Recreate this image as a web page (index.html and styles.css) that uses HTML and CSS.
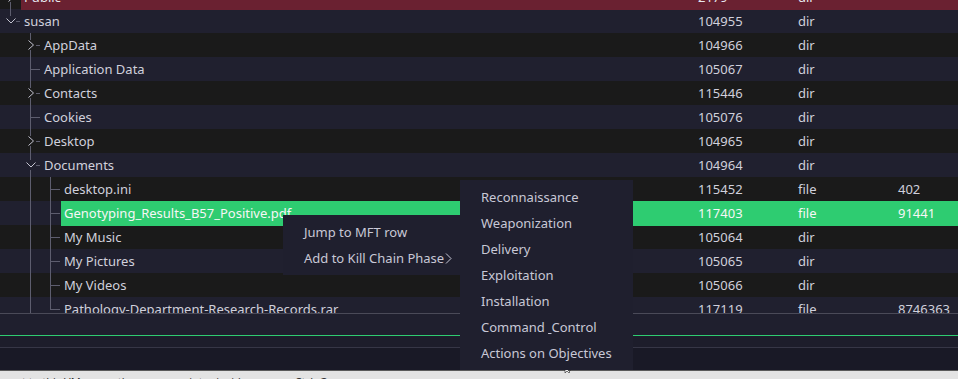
FILE: index.html
```html
<!DOCTYPE html>
<html lang="en">
<head>
  <meta charset="UTF-8" />
  <meta name="viewport" content="width=device-width, initial-scale=1.0" />
  <title>MFT Browser</title>
  <link rel="stylesheet" href="styles.css">
</head>
<body>

  <div class="vm">
    <div class="tree">
      <div class="rows">

        <div class="row flag">
          <div class="name">
            <span class="g tee"><svg class="chev" viewBox="0 0 10 10"><polyline points="2.5,0.5 7.5,5 2.5,9.5" /></svg></span>
            <span class="label">Public</span>
          </div>
          <span class="cell">2179</span><span class="cell">dir</span><span class="cell"></span>
        </div>

        <div class="row">
          <div class="name">
            <span class="g end"><svg class="chev" viewBox="0 0 10 10"><polyline points="0.5,2.5 5,7 9.5,2.5" /></svg></span>
            <span class="label">susan</span>
          </div>
          <span class="cell">104955</span><span class="cell">dir</span><span class="cell"></span>
        </div>

        <div class="row">
          <div class="name">
            <span class="g"></span>
            <span class="g tee"><svg class="chev" viewBox="0 0 10 10"><polyline points="2.5,0.5 7.5,5 2.5,9.5" /></svg></span>
            <span class="label">AppData</span>
          </div>
          <span class="cell">104966</span><span class="cell">dir</span><span class="cell"></span>
        </div>

        <div class="row">
          <div class="name">
            <span class="g"></span>
            <span class="g tee"></span>
            <span class="label">Application Data</span>
          </div>
          <span class="cell">105067</span><span class="cell">dir</span><span class="cell"></span>
        </div>

        <div class="row">
          <div class="name">
            <span class="g"></span>
            <span class="g tee"><svg class="chev" viewBox="0 0 10 10"><polyline points="2.5,0.5 7.5,5 2.5,9.5" /></svg></span>
            <span class="label">Contacts</span>
          </div>
          <span class="cell">115446</span><span class="cell">dir</span><span class="cell"></span>
        </div>

        <div class="row">
          <div class="name">
            <span class="g"></span>
            <span class="g tee"></span>
            <span class="label">Cookies</span>
          </div>
          <span class="cell">105076</span><span class="cell">dir</span><span class="cell"></span>
        </div>

        <div class="row">
          <div class="name">
            <span class="g"></span>
            <span class="g tee"><svg class="chev" viewBox="0 0 10 10"><polyline points="2.5,0.5 7.5,5 2.5,9.5" /></svg></span>
            <span class="label">Desktop</span>
          </div>
          <span class="cell">104965</span><span class="cell">dir</span><span class="cell"></span>
        </div>

        <div class="row">
          <div class="name">
            <span class="g"></span>
            <span class="g tee"><svg class="chev" viewBox="0 0 10 10"><polyline points="0.5,2.5 5,7 9.5,2.5" /></svg></span>
            <span class="label">Documents</span>
          </div>
          <span class="cell">104964</span><span class="cell">dir</span><span class="cell"></span>
        </div>

        <div class="row">
          <div class="name">
            <span class="g"></span>
            <span class="g pipe"></span>
            <span class="g tee"></span>
            <span class="label">desktop.ini</span>
          </div>
          <span class="cell">115452</span><span class="cell">file</span><span class="cell">402</span>
        </div>

        <div class="row sel">
          <div class="name">
            <span class="g"></span>
            <span class="g pipe"></span>
            <span class="g tee"></span>
            <span class="label">Genotyping_Results_B57_Positive.pdf</span>
          </div>
          <span class="cell">117403</span><span class="cell">file</span><span class="cell">91441</span>
        </div>

        <div class="row">
          <div class="name">
            <span class="g"></span>
            <span class="g pipe"></span>
            <span class="g tee"></span>
            <span class="label">My Music</span>
          </div>
          <span class="cell">105064</span><span class="cell">dir</span><span class="cell"></span>
        </div>

        <div class="row">
          <div class="name">
            <span class="g"></span>
            <span class="g pipe"></span>
            <span class="g tee"></span>
            <span class="label">My Pictures</span>
          </div>
          <span class="cell">105065</span><span class="cell">dir</span><span class="cell"></span>
        </div>

        <div class="row">
          <div class="name">
            <span class="g"></span>
            <span class="g pipe"></span>
            <span class="g tee"></span>
            <span class="label">My Videos</span>
          </div>
          <span class="cell">105066</span><span class="cell">dir</span><span class="cell"></span>
        </div>

        <div class="row">
          <div class="name">
            <span class="g"></span>
            <span class="g pipe"></span>
            <span class="g end"></span>
            <span class="label">Pathology-Department-Research-Records.rar</span>
          </div>
          <span class="cell">117119</span><span class="cell">file</span><span class="cell">8746363</span>
        </div>

      </div>
    </div>

    <div class="pane pane-a"></div>
    <div class="pane pane-b"></div>
    <div class="pane pane-c"></div>

    <div class="status">
      <span class="status-text">t to this VM, move the mouse pointer inside or press Ctrl+G.</span>
    </div>

    <!-- context menu + kill chain submenu -->
    <div class="menu menu-main">
      <div class="item">Jump to MFT row</div>
      <div class="item has-sub">Add to Kill Chain Phase
        <svg class="sub-arrow" viewBox="0 0 7 11"><polyline points="1,0.5 6,5.5 1,10.5" /></svg>
      </div>
    </div>

    <div class="menu menu-sub">
      <div class="item">Reconnaissance</div>
      <div class="item">Weaponization</div>
      <div class="item">Delivery</div>
      <div class="item">Exploitation</div>
      <div class="item">Installation</div>
      <div class="item">Command <u>&nbsp;</u>Control</div>
      <div class="item">Actions on Objectives</div>
    </div>

    <svg class="cursor" viewBox="0 0 8 8"><polygon points="1,1 1,8 3,6 5,8 6,7 4,5 7,5" /></svg>
  </div>

</body>
</html>
```

FILE: styles.css
```css
body {
  margin: 0;
  background-color: #1a1a1a;
  font-family: "Noto Sans", sans-serif;
  font-size: 13px;
  color: #d0d0dc;
  overflow: hidden;
}
.vm {
  position: relative;
  width: 958px;
  height: 379px;
  display: flex;
  flex-direction: column;
  overflow: hidden;
}

/* tree table */
.tree {
  height: 313px;
  overflow: hidden;
  flex: none;
}
.rows {
  margin-top: -15px;
}
.row {
  --bg: #1a1a1a;
  display: grid;
  grid-template-columns: 698px 100px 100px 60px;
  height: 24px;
  line-height: 25px;
  background-color: var(--bg);
  white-space: nowrap;
}
.row:nth-child(even) {
  --bg: #20202f;
}
.name {
  display: flex;
}
.label {
  flex: 1;
  margin-left: 1px;
  padding-left: 3px;
}
.row.flag .label,
.row.flag .cell {
  background-color: #6a2131;
  color: #e6e6ee;
}
.row.sel .label,
.row.sel .cell {
  background-color: #2ecc71;
  color: #f6f6f6;
}

/* branch guides */
.g {
  --line: #5d5d6e;
  flex: none;
  width: 20px;
  height: 24px;
  background-repeat: no-repeat;
}
.g.pipe {
  background-image: linear-gradient(var(--line), var(--line));
  background-position: 10px 0;
  background-size: 1px 100%;
}
.g.tee {
  background-image: linear-gradient(var(--line), var(--line)), linear-gradient(var(--line), var(--line));
  background-position: 10px 0, 10px 12px;
  background-size: 1px 100%, 11px 1px;
}
.g.end {
  background-image: linear-gradient(var(--line), var(--line)), linear-gradient(var(--line), var(--line));
  background-position: 10px 0, 10px 12px;
  background-size: 1px 12px, 11px 1px;
}
.chev {
  display: block;
  width: 10px;
  height: 10px;
  margin: 7px 0 0 6px;
  background-color: var(--bg);
  fill: none;
  stroke: #c4c4d0;
  stroke-width: 1;
}

/* lower panes */
.pane {
  flex: none;
}
.pane-a {
  height: 21px;
  border-top: 1px solid #4a4a58;
  background-color: #1f1f2e;
}
.pane-b {
  height: 11px;
  border-top: 1px solid #2ecc71;
  background-color: #1d1d2b;
}
.pane-c {
  height: 22px;
  border-top: 1px solid #363646;
  background-color: #191926;
}
.status {
  flex: none;
  height: 8px;
  border-top: 1px solid #5a5a5a;
  background-color: #e3e3e3;
  overflow: hidden;
  font-size: 11px;
  line-height: 12px;
  color: #333;
  padding-left: 22px;
}
.status-text {
  display: block;
  padding-top: 5px;
  white-space: nowrap;
}

/* menus */
.menu {
  position: absolute;
  background-color: #1f1f2e;
  padding: 4px 0;
  color: #c8c8d6;
  z-index: 2;
}
.menu-main {
  left: 283px;
  top: 215px;
  width: 177px;
  height: 52px;
}
.menu-sub {
  left: 460px;
  top: 180px;
  width: 173px;
  height: 182px;
}
.item {
  height: 26px;
  line-height: 26px;
  padding-left: 21px;
  white-space: nowrap;
}
.item u {
  text-decoration: underline;
}
.has-sub {
  display: flex;
  align-items: center;
}
.sub-arrow {
  width: 7px;
  height: 11px;
  margin-left: 1px;
  fill: none;
  stroke: #c8c8d6;
  stroke-width: 1;
}
.cursor {
  position: absolute;
  left: 564px;
  top: 365px;
  width: 8px;
  height: 8px;
  fill: #f0f0f0;
  stroke: #222;
  stroke-width: 0.6;
  z-index: 1;
}
```
